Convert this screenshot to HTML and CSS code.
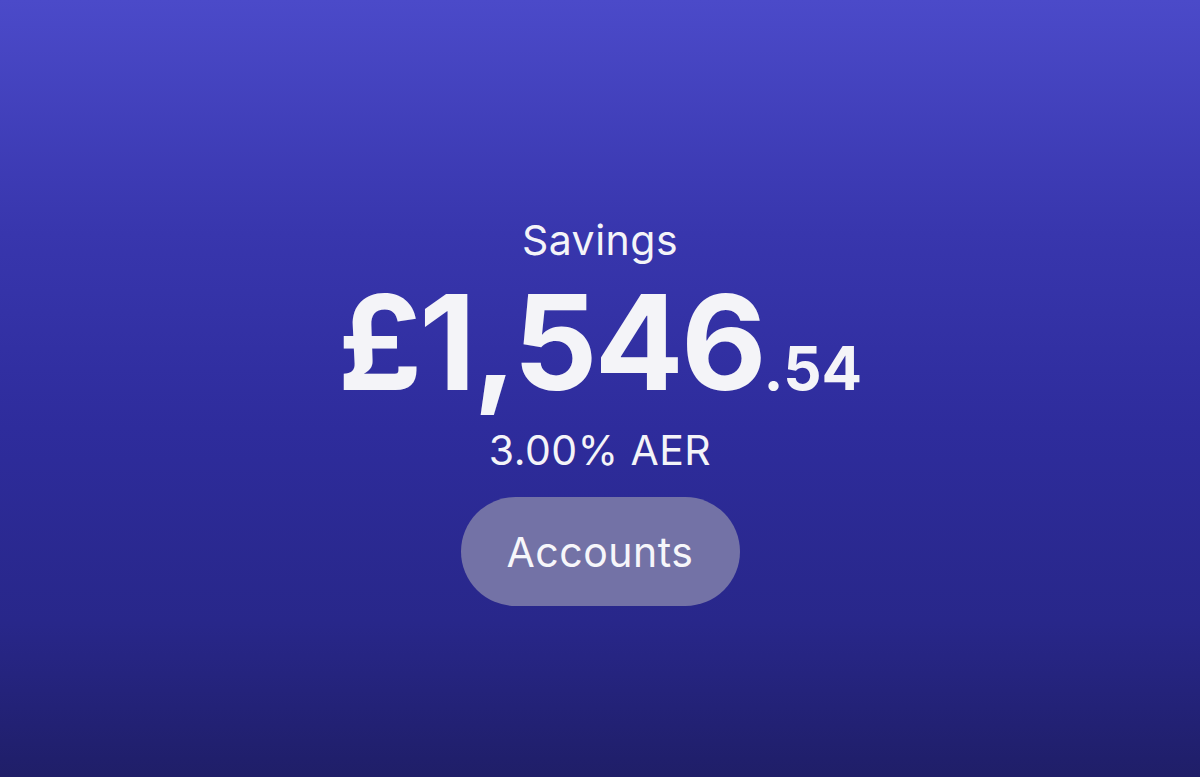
FILE: index.html
```html
<!DOCTYPE html>
<html lang="en">
  <head>
    <meta charset="UTF-8" />
    <meta name="viewport" content="width=device-width, initial-scale=1.0" />
    <title>Savings</title>
    <link rel="stylesheet" href="styles.css">
  </head>
  <body>
    <div class="savings">
      <div class="title">Savings</div>
      <div class="balance">£1,546<span class="pence">.54</span></div>
      <div class="rate">3.00% AER</div>
      <a href="javascript:;" class="btn">Accounts</a>
    </div>
  </body>
</html>
```

FILE: styles.css
```css
* {
  margin: 0;
  padding: 0;
}
html,
body {
  height: 100%;
}
body {
  font-family: Inter, "Noto Sans", sans-serif;
  color: #f4f4f8;
  background: linear-gradient(180deg, #4b4ac9 0%, #3836ad 30%, #2e2c9c 55%, #28278a 80%, #1f1e68 100%);
}
.savings {
  height: 100%;
  display: flex;
  flex-direction: column;
  align-items: center;
  padding-top: 215px;
  box-sizing: border-box;
}
.title {
  font-size: 41px;
  line-height: 50px;
  letter-spacing: 0.5px;
}
.balance {
  font-size: 132px;
  font-weight: 700;
  line-height: 154px;
  letter-spacing: -3px;
  margin-bottom: 6px;
}
.balance .pence {
  font-size: 60px;
  line-height: 0;
  letter-spacing: 0;
}
.rate {
  font-size: 41px;
  line-height: 50px;
  letter-spacing: 0.5px;
}
.btn {
  margin-top: 22px;
  width: 279px;
  height: 109px;
  border-radius: 55px;
  background-color: #7372a6;
  color: #f6f6fa;
  text-decoration: none;
  font-size: 41px;
  letter-spacing: 0.5px;
  display: flex;
  align-items: center;
  justify-content: center;
}
```
